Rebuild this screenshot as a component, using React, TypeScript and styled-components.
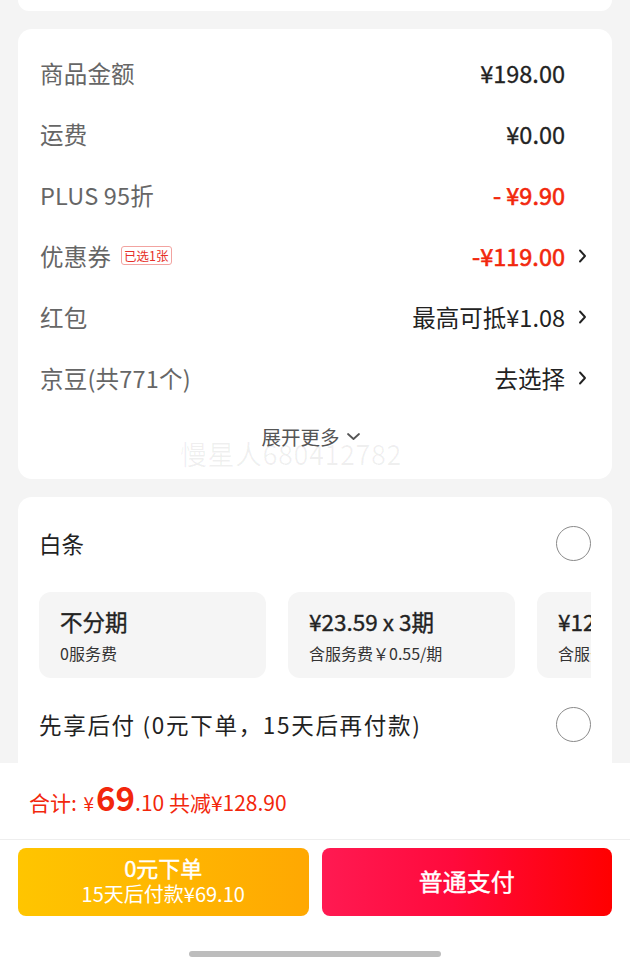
import React from "react";
import styled, { createGlobalStyle } from "styled-components";

const GlobalStyle = createGlobalStyle`
  html, body { margin: 0; padding: 0; background: #f4f4f4; }
  body { font-family: "Noto Sans CJK SC", "Noto Sans", sans-serif; -webkit-font-smoothing: antialiased; }
  * { box-sizing: border-box; }
`;

const Page = styled.div`
  width: 630px;
  height: 970px;
  display: flex;
  flex-direction: column;
  background: #f4f4f4;
  overflow: hidden;
`;

const Scroll = styled.div`
  flex: 1;
  min-height: 0;
  overflow: hidden;
  padding: 0 18px;
  display: flex;
  flex-direction: column;
  gap: 18px;
`;

const CardStub = styled.div`
  flex-shrink: 0;
  height: 11px;
  background: #fff;
  border-radius: 0 0 14px 14px;
`;

const Card = styled.div<{ $pad?: string }>`
  position: relative;
  flex-shrink: 0;
  background: #fff;
  border-radius: 14px;
  padding: ${(p) => p.$pad || "13px 0 15px"};
`;

const FeeRow = styled.div`
  height: 61px;
  display: flex;
  align-items: center;
  padding: 0 25px 0 22px;
`;

const Label = styled.div`
  font-size: 23.5px;
  color: #666;
  display: flex;
  align-items: center;
  gap: 10px;
  letter-spacing: 0.2px;
`;

const Tag = styled.span`
  font-size: 12.5px;
  line-height: 17px;
  color: #e6302a;
  border: 1px solid #f2a3a0;
  border-radius: 3px;
  padding: 0 2px;
  letter-spacing: 0;
`;

const Value = styled.div<{ $red?: boolean }>`
  margin-left: auto;
  font-size: 23.5px;
  font-weight: 400;
  -webkit-text-stroke: ${(p) => (p.$red ? "0.6px" : "0.3px")} currentColor;
  color: ${(p) => (p.$red ? "#f2270c" : "#222")};
`;

const Plain = styled.div`
  margin-left: auto;
  font-size: 23.5px;
  color: #222;
`;

const ChevSlot = styled.div`
  width: 22px;
  display: flex;
  justify-content: flex-end;
  align-items: center;
`;

const Expand = styled.div`
  height: 56px;
  display: flex;
  align-items: center;
  justify-content: center;
  gap: 6px;
  font-size: 19.5px;
  color: #555;
  padding-left: 4px;
  padding-right: 12px;
`;

const Watermark = styled.div`
  position: absolute;
  left: 162px;
  top: 405px;
  font-size: 27px;
  color: rgba(0, 0, 0, 0.06);
  letter-spacing: 0.5px;
  pointer-events: none;
`;

const PayRow = styled.div`
  height: 60px;
  display: flex;
  align-items: center;
  justify-content: space-between;
`;

const PayLabel = styled.div<{ $wide?: boolean }>`
  font-size: 22.5px;
  color: #222;
  letter-spacing: ${(p) => (p.$wide ? "1.7px" : "0")};
`;

const Radio = styled.div`
  width: 35px;
  height: 35px;
  border-radius: 50%;
  border: 1.5px solid #8a8a8a;
  flex-shrink: 0;
`;

const Options = styled.div`
  display: flex;
  gap: 22px;
  overflow: hidden;
  margin: 19px 0 16px;
`;

const Option = styled.div`
  flex: 0 0 227px;
  height: 86px;
  border-radius: 12px;
  background: #f5f5f5;
  padding: 0 21px;
  display: flex;
  flex-direction: column;
  justify-content: center;
  gap: 6px;
  overflow: hidden;
`;

const OptTitle = styled.div`
  font-size: 22.5px;
  line-height: 30px;
  font-weight: 400;
  -webkit-text-stroke: 0.35px currentColor;
  color: #222;
  white-space: nowrap;
`;

const OptSub = styled.div`
  font-size: 16px;
  line-height: 22px;
  color: #333;
  white-space: nowrap;
`;

const Bottom = styled.div`
  flex-shrink: 0;
  background: #fff;
  display: flex;
  flex-direction: column;
`;

const TotalRow = styled.div`
  height: 77px;
  display: flex;
  align-items: center;
  padding: 0 0 4px 29px;
  color: #f2270c;
  border-bottom: 1px solid #eeeeee;
`;

const TotalText = styled.div`
  display: flex;
  align-items: baseline;
  font-size: 21px;
  white-space: pre;
`;

const Yen = styled.span`
  font-size: 19px;
  margin-left: 2px;
`;

const Big = styled.span`
  font-size: 33px;
  font-weight: 700;
  line-height: 1;
  margin-left: 2px;
`;

const Buttons = styled.div`
  display: flex;
  gap: 13px;
  padding: 8px 18px 0;
`;

const Btn = styled.button<{ $kind: "yellow" | "red" }>`
  flex: 1;
  height: 68px;
  border: none;
  border-radius: 8px;
  color: #fff;
  font-family: inherit;
  padding: 0 0 3px;
  display: flex;
  flex-direction: column;
  align-items: center;
  justify-content: center;
  background: ${(p) =>
    p.$kind === "yellow"
      ? "linear-gradient(90deg, #ffc500 0%, #ffa802 100%)"
      : "linear-gradient(90deg, #ff1a52 0%, #ff0a3c 45%, #ff0000 100%)"};
`;

const BtnMain = styled.div<{ $size: number }>`
  font-size: ${(p) => p.$size}px;
  line-height: 27px;
  font-weight: 400;
  -webkit-text-stroke: 0.4px currentColor;
`;

const BtnSub = styled.div`
  font-size: 20px;
  line-height: 26px;
`;

const IndicatorArea = styled.div`
  height: 54px;
  display: flex;
  justify-content: center;
  padding-top: 35px;
`;

const Indicator = styled.div`
  width: 252px;
  height: 6px;
  border-radius: 3px;
  background: #bdbdbd;
`;

const ChevronRight = () => (
  <svg width="9" height="16" viewBox="0 0 9 16" fill="none">
    <path d="M2 2.5 L7 8 L2 13.5" stroke="#222" strokeWidth="1.9" strokeLinecap="round" strokeLinejoin="round" />
  </svg>
);

const ChevronDown = () => (
  <svg width="15" height="9" viewBox="0 0 15 9" fill="none">
    <path d="M2 2 L7.5 7 L13 2" stroke="#555" strokeWidth="1.8" strokeLinecap="round" strokeLinejoin="round" />
  </svg>
);

type Fee = {
  label: string;
  tag?: string;
  value: string;
  kind: "value" | "red" | "plain";
  chevron?: boolean;
};

const fees: Fee[] = [
  { label: "商品金额", value: "¥198.00", kind: "value" },
  { label: "运费", value: "¥0.00", kind: "value" },
  { label: "PLUS 95折", value: "- ¥9.90", kind: "red" },
  { label: "优惠券", tag: "已选1张", value: "-¥119.00", kind: "red", chevron: true },
  { label: "红包", value: "最高可抵¥1.08", kind: "plain", chevron: true },
  { label: "京豆(共771个)", value: "去选择", kind: "plain", chevron: true },
];

const plans = [
  { title: "不分期", sub: "0服务费" },
  { title: "¥23.59 x 3期", sub: "含服务费￥0.55/期" },
  { title: "¥12.04 x 6期", sub: "含服务费￥0.52/期" },
];

export default function App() {
  return (
    <>
      <GlobalStyle />
      <Page>
        <Scroll>
          <CardStub />
          <Card>
            {fees.map((f) => (
              <FeeRow key={f.label}>
                <Label>
                  {f.label}
                  {f.tag && <Tag>{f.tag}</Tag>}
                </Label>
                {f.kind === "plain" ? (
                  <Plain>{f.value}</Plain>
                ) : (
                  <Value $red={f.kind === "red"}>{f.value}</Value>
                )}
                <ChevSlot>{f.chevron && <ChevronRight />}</ChevSlot>
              </FeeRow>
            ))}
            <Expand>
              展开更多
              <ChevronDown />
            </Expand>
            <Watermark>慢星人680412782</Watermark>
          </Card>
          <Card $pad="16px 21px">
            <PayRow>
              <PayLabel>白条</PayLabel>
              <Radio />
            </PayRow>
            <Options>
              {plans.map((p) => (
                <Option key={p.title}>
                  <OptTitle>{p.title}</OptTitle>
                  <OptSub>{p.sub}</OptSub>
                </Option>
              ))}
            </Options>
            <PayRow>
              <PayLabel $wide>先享后付 (0元下单，15天后再付款)</PayLabel>
              <Radio />
            </PayRow>
            <PayRow />
          </Card>
        </Scroll>
        <Bottom>
          <TotalRow>
            <TotalText>
              合计: <Yen>¥</Yen>
              <Big>69</Big>.10 共减¥128.90
            </TotalText>
          </TotalRow>
          <Buttons>
            <Btn $kind="yellow">
              <BtnMain $size={22}>0元下单</BtnMain>
              <BtnSub>15天后付款¥69.10</BtnSub>
            </Btn>
            <Btn $kind="red">
              <BtnMain $size={24}>普通支付</BtnMain>
            </Btn>
          </Buttons>
          <IndicatorArea>
            <Indicator />
          </IndicatorArea>
        </Bottom>
      </Page>
    </>
  );
}
